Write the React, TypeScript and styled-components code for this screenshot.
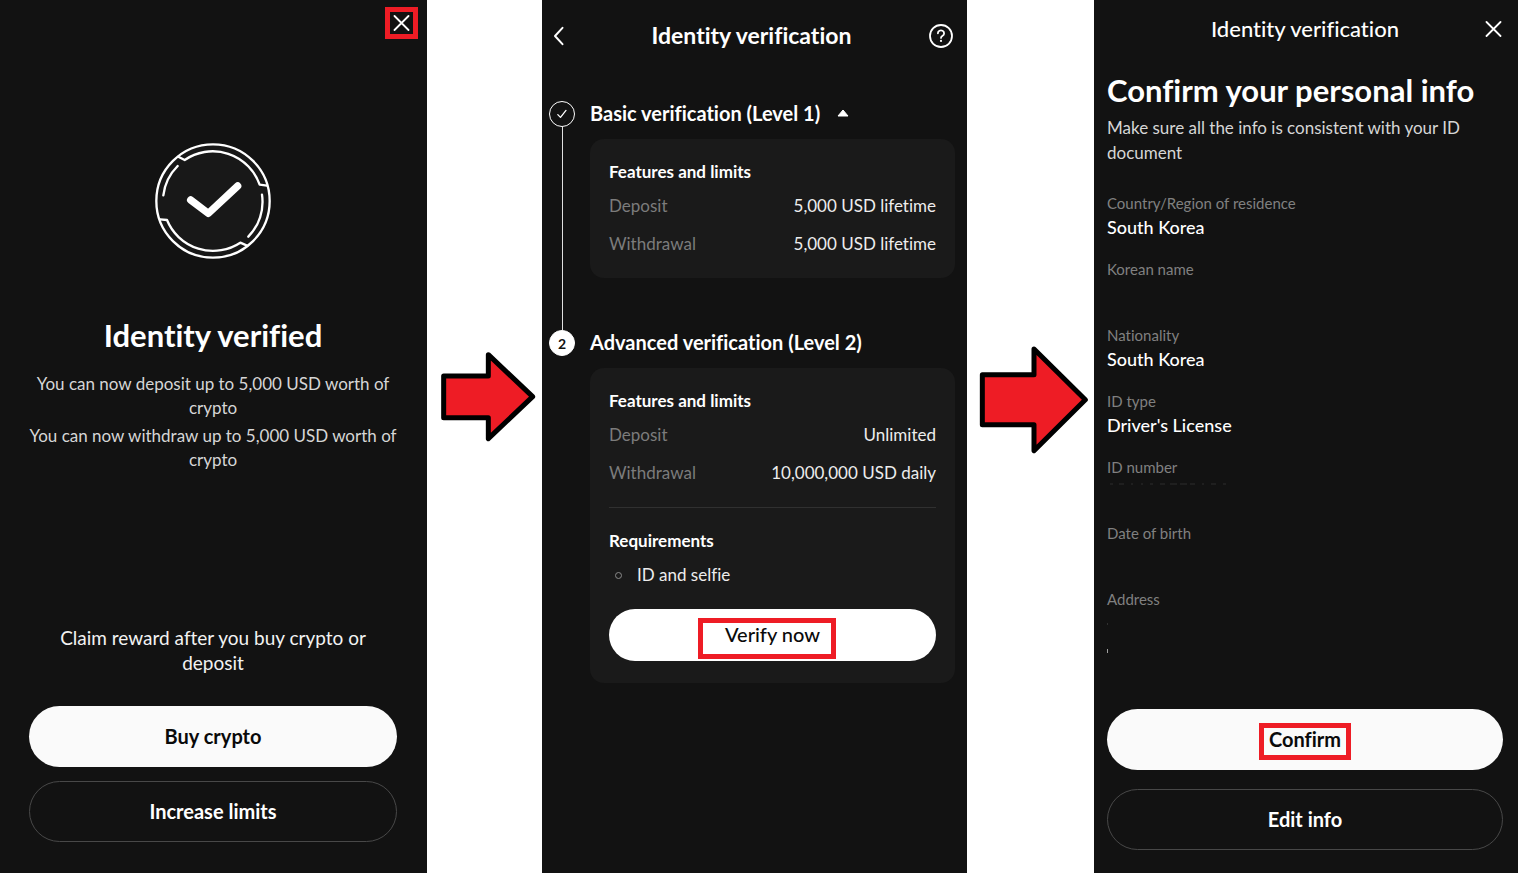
import React from "react";
import styled, { createGlobalStyle, css } from "styled-components";

const GlobalStyle = createGlobalStyle`
  *, *::before, *::after { box-sizing: border-box; }
  body {
    margin: 0;
    background: #fff;
    color: #fff;
    font-family: Lato, "Open Sans", sans-serif;
    font-variant-ligatures: none;
  }
  h1, h2, h3, p, dl, dd, ul, ol { margin: 0; padding: 0; }
  ul, ol { list-style: none; }
  button { font: inherit; padding: 0; cursor: pointer; }
  svg { display: block; }
`;

const RED = "#ee1c25";

const Page = styled.main`
  display: grid;
  grid-template-columns: 427fr 115fr 425fr 127fr 424fr;
  min-height: 100vh;
`;

const Screen = styled.section<{ $inset: string }>`
  display: flex;
  flex-direction: column;
  min-width: 0;
  padding: ${(p) => p.$inset};
  background: #121212;
`;

const Connector = styled.div<{ $top: number }>`
  display: flex;
  justify-content: flex-end;
  align-items: flex-start;
  padding: ${(p) => p.$top}px 6px 0 0;
`;

const IconButton = styled.button<{ $marked?: boolean }>`
  display: flex;
  align-items: center;
  justify-content: center;
  width: 33px;
  height: 32px;
  border: ${(p) => (p.$marked ? `5px solid ${RED}` : "0")};
  background: none;
  color: #fff;
`;

const Pill = styled.button<{ $variant: "solid" | "outline"; $compact?: boolean }>`
  position: relative;
  width: 100%;
  height: ${(p) => (p.$compact ? 52 : 61)}px;
  padding-bottom: 2px;
  border-radius: 31px;
  font-size: 20px;
  font-weight: ${(p) => (p.$compact ? 500 : 700)};
  line-height: 24px;
  ${(p) =>
    p.$variant === "solid"
      ? css`
          border: 0;
          background: ${p.$compact ? "#fff" : "#fafafa"};
          color: #0a0a0a;
        `
      : css`
          border: 1px solid #484848;
          background: none;
          color: #fff;
        `}
`;

const Highlight = styled.span<{ $w: number; $h: number; $dx: number; $dy: number }>`
  position: absolute;
  top: calc(50% + ${(p) => p.$dy - p.$h / 2}px);
  left: calc(50% + ${(p) => p.$dx - p.$w / 2}px);
  width: ${(p) => p.$w}px;
  height: ${(p) => p.$h}px;
  border: 5px solid ${RED};
`;

const Actions = styled.div<{ $gap: number }>`
  display: flex;
  flex-direction: column;
  gap: ${(p) => p.$gap}px;
`;

/* Result screen */

const CloseRow = styled.div`
  display: flex;
  justify-content: flex-end;
  height: 136px;
  margin-right: -21px;
`;

const Result = styled.div`
  display: flex;
  flex-direction: column;
  align-items: center;
  text-align: center;
`;

const ResultTitle = styled.h1`
  margin: 56px 0 17px;
  font-size: 31px;
  font-weight: 700;
  line-height: 40px;
`;

const ResultText = styled.p`
  margin-bottom: 4px;
  color: #d6d6d6;
  font-size: 17px;
  line-height: 24px;
`;

const Reward = styled.p`
  margin: auto 30px 31px;
  color: #f2f2f2;
  font-size: 19px;
  line-height: 25px;
  text-align: center;
`;

/* Level screen */

const TopBar = styled.header<{ $height: number; $lead: number; $inset: string }>`
  display: grid;
  grid-template-columns: ${(p) => p.$lead}px 1fr 33px;
  align-items: center;
  height: ${(p) => p.$height}px;
  margin: ${(p) => p.$inset};
`;

const BarTitle = styled.h2<{ $weight: number }>`
  grid-column: 2;
  padding-bottom: 1px;
  font-size: ${(p) => (p.$weight > 500 ? 23 : 22)}px;
  font-weight: ${(p) => p.$weight};
  line-height: 27px;
  text-align: center;
`;

const Steps = styled.ol`
  padding: 29px 12px 0 7px;
`;

const Step = styled.li`
  display: grid;
  grid-template-columns: 26px 1fr;
  column-gap: 15px;
`;

const Rail = styled.div`
  display: flex;
  flex-direction: column;
  align-items: center;
`;

const Marker = styled.span<{ $filled?: boolean }>`
  display: flex;
  align-items: center;
  justify-content: center;
  width: 26px;
  height: 26px;
  border: 1px solid #fff;
  border-radius: 50%;
  background: ${(p) => (p.$filled ? "#fff" : "#121212")};
  color: #121212;
  font-size: 14px;
  font-weight: 700;
`;

const Line = styled.span`
  flex: 1;
  width: 1px;
  background: #e0e0e0;
`;

const StepBody = styled.div<{ $last?: boolean }>`
  padding-bottom: ${(p) => (p.$last ? 0 : 52)}px;
`;

const StepTitle = styled.h3`
  display: flex;
  align-items: center;
  gap: 17px;
  margin: 0 0 14px;
  font-size: 20px;
  font-weight: 700;
  line-height: 24px;
  white-space: nowrap;
`;

const Card = styled.div`
  display: flex;
  flex-direction: column;
  padding: 21px 19px 22px;
  border-radius: 14px;
  background: #1a1a1a;
`;

const CardTitle = styled.h3`
  margin-bottom: 10px;
  font-size: 17px;
  font-weight: 700;
  line-height: 24px;
`;

const Limits = styled.dl`
  display: flex;
  flex-direction: column;
  gap: 14px;
`;

const Limit = styled.div`
  display: flex;
  justify-content: space-between;
  font-size: 17px;
  line-height: 24px;

  dt { color: #7c7c7c; }
  dd { color: #ededed; }
`;

const Divider = styled.hr`
  width: 100%;
  height: 1px;
  margin: 22px 0 21px;
  border: 0;
  background: #303030;
`;

const Requirement = styled.li`
  display: flex;
  align-items: center;
  gap: 15px;
  margin-bottom: 22px;
  padding-left: 6px;
  color: #ededed;
  font-size: 17px;
  line-height: 24px;

  &::before {
    content: "";
    width: 7px;
    height: 7px;
    border: 1px solid #8a8a8a;
    border-radius: 50%;
  }
`;

/* Personal info screen */

const InfoTitle = styled.h1`
  margin: 12px 0 5px;
  font-size: 31px;
  font-weight: 700;
  line-height: 40px;
  white-space: nowrap;
`;

const InfoText = styled.p`
  margin-bottom: 26px;
  color: #d6d6d6;
  font-size: 17px;
  line-height: 25px;
`;

const Fields = styled.dl`
  display: flex;
  flex-direction: column;
  gap: 18px;
  margin-bottom: auto;
`;

const Field = styled.div`
  dt {
    color: #808080;
    font-size: 15px;
    line-height: 24px;
  }
  dd {
    height: 24px;
    color: #fff;
    font-size: 18px;
    font-weight: 500;
    line-height: 24px;
  }
`;

const CloseIcon = () => (
  <svg width="17" height="17" viewBox="0 0 17 17" fill="none" stroke="currentColor" strokeWidth="1.8" strokeLinecap="round">
    <path d="M1.5 1l14 14M15.5 1l-14 14" />
  </svg>
);

const BackIcon = () => (
  <svg width="12" height="20" viewBox="0 0 12 20" fill="none" stroke="currentColor" strokeWidth="2" strokeLinecap="round" strokeLinejoin="round">
    <path d="M9.5 1.8L2 10l7.5 8.2" />
  </svg>
);

const HelpIcon = () => (
  <svg width="24" height="24" viewBox="0 0 24 24" fill="none" stroke="currentColor" strokeWidth="1.8" strokeLinecap="round" strokeLinejoin="round">
    <circle cx="12" cy="12" r="11" />
    <path d="M8.9 9.3a3.1 2.9 0 1 1 4.7 2.5c-1 .6-1.6 1-1.6 2.1" />
    <circle cx="12" cy="16.9" r="1.1" fill="currentColor" stroke="none" />
  </svg>
);

const TickIcon = () => (
  <svg width="12" height="12" viewBox="0 0 12 12" fill="none" stroke="#fff" strokeWidth="1.3" strokeLinecap="round" strokeLinejoin="round">
    <path d="M1.8 6.6l2.7 2.8L10 2.4" />
  </svg>
);

const CaretIcon = () => (
  <svg width="12" height="8" viewBox="0 0 12 8" fill="#fff" stroke="#fff" strokeLinejoin="round">
    <path d="M6 1l5 6H1z" />
  </svg>
);

const SealIcon = () => (
  <svg width="116" height="116" viewBox="42 37 348 348" fill="none" stroke="#fff" strokeWidth="7" strokeLinecap="round" strokeLinejoin="round">
    <circle cx="216" cy="211" r="170" fill="#181818" />
    <path d="M112 78l19 10A149 149 0 0 1 356 162l22 3" />
    <path d="M57 266l21 2A149 149 0 0 0 298 336l20 9" />
    <path d="M110 106A149 149 0 0 0 67 194M363 192A149 149 0 0 1 322 318" />
    <path d="M149 208l53 40 88-82" strokeWidth="22" />
  </svg>
);

const SmallArrow = () => (
  <svg width="95" height="90" viewBox="33 35 285 270" fill={RED} stroke="#000" strokeWidth="15" strokeLinejoin="round" aria-hidden="true">
    <path d="M41 107h134V43l133 126-133 126v-63H41z" />
  </svg>
);

const LargeArrow = () => (
  <svg width="109" height="108" viewBox="28 32 327 324" fill={RED} stroke="#000" strokeWidth="15" strokeLinejoin="round" aria-hidden="true">
    <path d="M38 118h155V41l154 152-154 153v-78H38z" />
  </svg>
);

const MaskedNumber = () => (
  <svg width="122" height="6" viewBox="0 0 122 6" stroke="#2c2c2c" aria-hidden="true">
    <path d="M3 5h3M12 5h5M24 5h2M34 5h2M43 5h3M53 5h5M63 5h7M73 5h7M83 5h5M95 5h2M104 5h5M116 5h3" />
  </svg>
);

const MaskedAddress = () => (
  <svg width="2" height="42" viewBox="0 0 2 42" aria-hidden="true">
    <path d="M.5 12v2" stroke="#303030" />
    <path d="M.5 38v4" stroke="#a0a0a0" />
  </svg>
);

type LimitItem = { label: string; value: string };

const LimitList = ({ items }: { items: LimitItem[] }) => (
  <Limits>
    {items.map((item) => (
      <Limit key={item.label}>
        <dt>{item.label}</dt>
        <dd>{item.value}</dd>
      </Limit>
    ))}
  </Limits>
);

const fields: { label: string; value?: React.ReactNode }[] = [
  { label: "Country/Region of residence", value: "South Korea" },
  { label: "Korean name" },
  { label: "Nationality", value: "South Korea" },
  { label: "ID type", value: "Driver's License" },
  { label: "ID number", value: <MaskedNumber /> },
  { label: "Date of birth" },
  { label: "Address", value: <MaskedAddress /> },
];

export default function App() {
  return (
    <>
      <GlobalStyle />
      <Page>
        <Screen $inset="7px 30px 31px 29px">
          <CloseRow>
            <IconButton $marked aria-label="Close">
              <CloseIcon />
            </IconButton>
          </CloseRow>
          <Result>
            <SealIcon />
            <ResultTitle>Identity verified</ResultTitle>
            <ResultText>You can now deposit up to 5,000 USD worth of crypto</ResultText>
            <ResultText>You can now withdraw up to 5,000 USD worth of crypto</ResultText>
          </Result>
          <Reward>Claim reward after you buy crypto or deposit</Reward>
          <Actions $gap={14}>
            <Pill $variant="solid">Buy crypto</Pill>
            <Pill $variant="outline">Increase limits</Pill>
          </Actions>
        </Screen>

        <Connector $top={352}>
          <SmallArrow />
        </Connector>

        <Screen $inset="0">
          <TopBar $height={72} $lead={37} $inset="0 10px 0 0">
            <IconButton aria-label="Back">
              <BackIcon />
            </IconButton>
            <BarTitle $weight={700}>Identity verification</BarTitle>
            <IconButton aria-label="Help">
              <HelpIcon />
            </IconButton>
          </TopBar>
          <Steps>
            <Step>
              <Rail>
                <Marker>
                  <TickIcon />
                </Marker>
                <Line />
              </Rail>
              <StepBody>
                <StepTitle>
                  Basic verification (Level 1)
                  <CaretIcon />
                </StepTitle>
                <Card>
                  <CardTitle>Features and limits</CardTitle>
                  <LimitList
                    items={[
                      { label: "Deposit", value: "5,000 USD lifetime" },
                      { label: "Withdrawal", value: "5,000 USD lifetime" },
                    ]}
                  />
                </Card>
              </StepBody>
            </Step>
            <Step>
              <Rail>
                <Marker $filled>2</Marker>
              </Rail>
              <StepBody $last>
                <StepTitle>Advanced verification (Level 2)</StepTitle>
                <Card>
                  <CardTitle>Features and limits</CardTitle>
                  <LimitList
                    items={[
                      { label: "Deposit", value: "Unlimited" },
                      { label: "Withdrawal", value: "10,000,000 USD daily" },
                    ]}
                  />
                  <Divider />
                  <CardTitle>Requirements</CardTitle>
                  <ul>
                    <Requirement>ID and selfie</Requirement>
                  </ul>
                  <Pill $variant="solid" $compact>
                    Verify now
                    <Highlight $w={138} $h={41} $dx={-6} $dy={3} />
                  </Pill>
                </Card>
              </StepBody>
            </Step>
          </Steps>
        </Screen>

        <Connector $top={346}>
          <LargeArrow />
        </Connector>

        <Screen $inset="0 15px 23px 13px">
          <TopBar $height={58} $lead={26} $inset="0 -7px 0 0">
            <BarTitle $weight={500}>Identity verification</BarTitle>
            <IconButton aria-label="Close">
              <CloseIcon />
            </IconButton>
          </TopBar>
          <InfoTitle>Confirm your personal info</InfoTitle>
          <InfoText>Make sure all the info is consistent with your ID document</InfoText>
          <Fields>
            {fields.map((field) => (
              <Field key={field.label}>
                <dt>{field.label}</dt>
                <dd>{field.value}</dd>
              </Field>
            ))}
          </Fields>
          <Actions $gap={19}>
            <Pill $variant="solid">
              Confirm
              <Highlight $w={92} $h={37} $dx={0} $dy={2} />
            </Pill>
            <Pill $variant="outline">Edit info</Pill>
          </Actions>
        </Screen>
      </Page>
    </>
  );
}
